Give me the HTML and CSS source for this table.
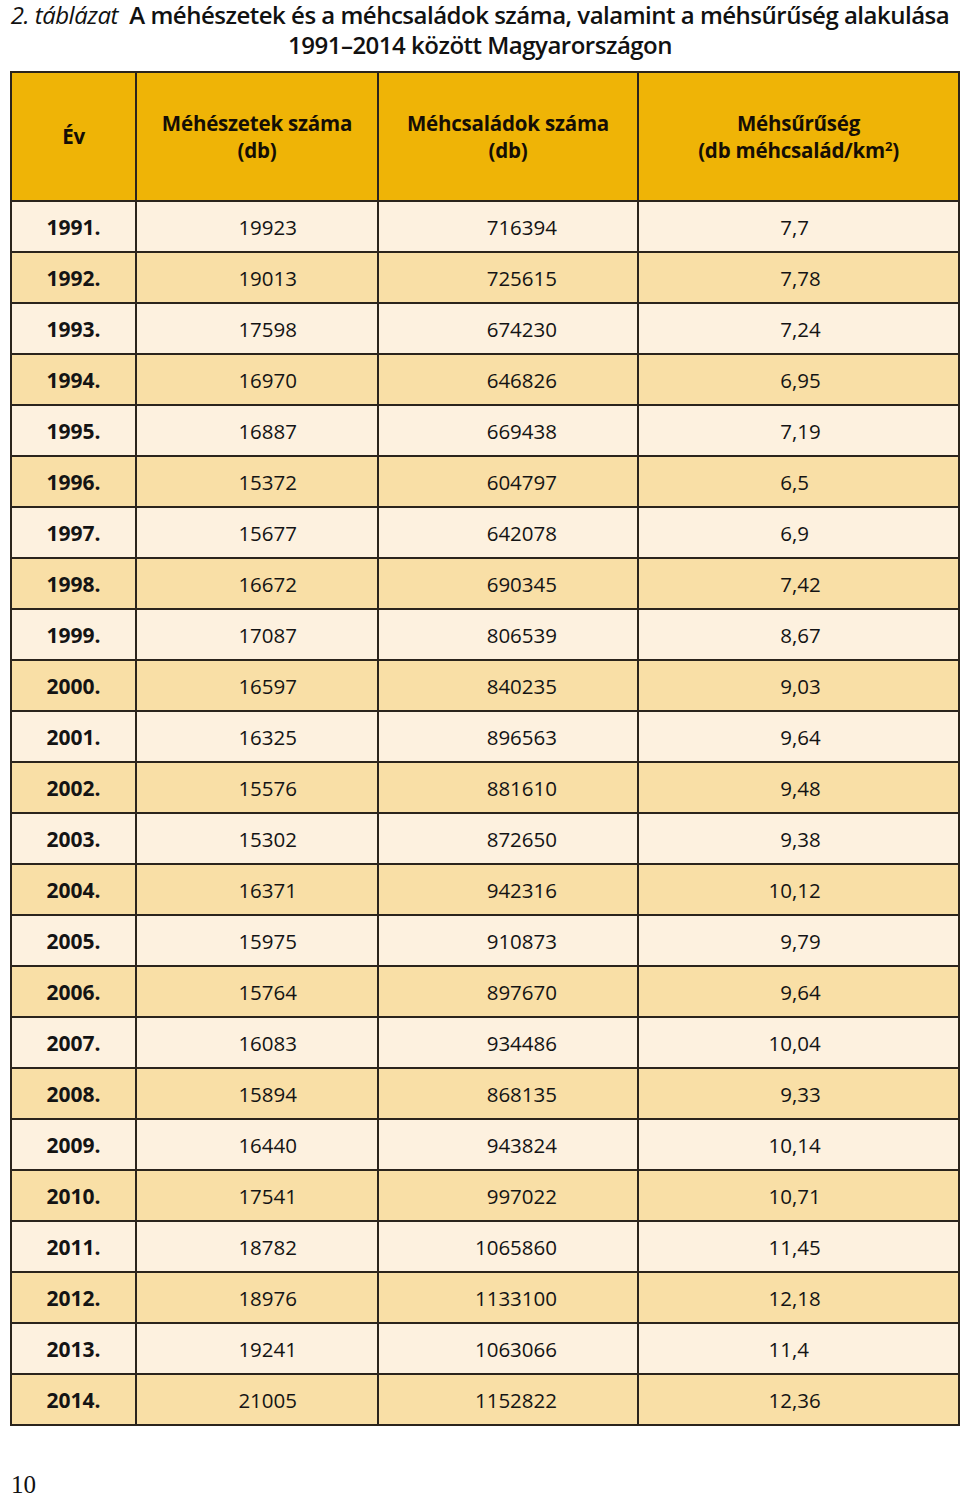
FILE: index.html
```html
<!DOCTYPE html>
<html lang="hu">
<head>
<meta charset="utf-8">
<link rel="stylesheet" href="styles.css">
</head>
<body>
<div class="page">
  <h1 class="title"><em>2. táblázat</em>&nbsp; A méhészetek és a méhcsaládok száma, valamint a méhsűrűség alakulása<br>1991–2014 között Magyarországon</h1>
  <table class="data">
    <colgroup>
      <col class="c1"><col class="c2"><col class="c3"><col class="c4">
    </colgroup>
    <thead>
      <tr>
        <th>Év</th>
        <th>Méhészetek száma<br>(db)</th>
        <th>Méhcsaládok száma<br>(db)</th>
        <th>Méhsűrűség<br>(db méhcsalád/km<sup>2</sup>)</th>
      </tr>
    </thead>
    <tbody>
      <tr class="l"><td class="y">1991.</td><td class="n">19923</td><td class="n">716394</td><td class="dec"><span class="i">7</span>,<span class="f">7</span></td></tr>
      <tr class="d"><td class="y">1992.</td><td class="n">19013</td><td class="n">725615</td><td class="dec"><span class="i">7</span>,<span class="f">78</span></td></tr>
      <tr class="l"><td class="y">1993.</td><td class="n">17598</td><td class="n">674230</td><td class="dec"><span class="i">7</span>,<span class="f">24</span></td></tr>
      <tr class="d"><td class="y">1994.</td><td class="n">16970</td><td class="n">646826</td><td class="dec"><span class="i">6</span>,<span class="f">95</span></td></tr>
      <tr class="l"><td class="y">1995.</td><td class="n">16887</td><td class="n">669438</td><td class="dec"><span class="i">7</span>,<span class="f">19</span></td></tr>
      <tr class="d"><td class="y">1996.</td><td class="n">15372</td><td class="n">604797</td><td class="dec"><span class="i">6</span>,<span class="f">5</span></td></tr>
      <tr class="l"><td class="y">1997.</td><td class="n">15677</td><td class="n">642078</td><td class="dec"><span class="i">6</span>,<span class="f">9</span></td></tr>
      <tr class="d"><td class="y">1998.</td><td class="n">16672</td><td class="n">690345</td><td class="dec"><span class="i">7</span>,<span class="f">42</span></td></tr>
      <tr class="l"><td class="y">1999.</td><td class="n">17087</td><td class="n">806539</td><td class="dec"><span class="i">8</span>,<span class="f">67</span></td></tr>
      <tr class="d"><td class="y">2000.</td><td class="n">16597</td><td class="n">840235</td><td class="dec"><span class="i">9</span>,<span class="f">03</span></td></tr>
      <tr class="l"><td class="y">2001.</td><td class="n">16325</td><td class="n">896563</td><td class="dec"><span class="i">9</span>,<span class="f">64</span></td></tr>
      <tr class="d"><td class="y">2002.</td><td class="n">15576</td><td class="n">881610</td><td class="dec"><span class="i">9</span>,<span class="f">48</span></td></tr>
      <tr class="l"><td class="y">2003.</td><td class="n">15302</td><td class="n">872650</td><td class="dec"><span class="i">9</span>,<span class="f">38</span></td></tr>
      <tr class="d"><td class="y">2004.</td><td class="n">16371</td><td class="n">942316</td><td class="dec"><span class="i">10</span>,<span class="f">12</span></td></tr>
      <tr class="l"><td class="y">2005.</td><td class="n">15975</td><td class="n">910873</td><td class="dec"><span class="i">9</span>,<span class="f">79</span></td></tr>
      <tr class="d"><td class="y">2006.</td><td class="n">15764</td><td class="n">897670</td><td class="dec"><span class="i">9</span>,<span class="f">64</span></td></tr>
      <tr class="l"><td class="y">2007.</td><td class="n">16083</td><td class="n">934486</td><td class="dec"><span class="i">10</span>,<span class="f">04</span></td></tr>
      <tr class="d"><td class="y">2008.</td><td class="n">15894</td><td class="n">868135</td><td class="dec"><span class="i">9</span>,<span class="f">33</span></td></tr>
      <tr class="l"><td class="y">2009.</td><td class="n">16440</td><td class="n">943824</td><td class="dec"><span class="i">10</span>,<span class="f">14</span></td></tr>
      <tr class="d"><td class="y">2010.</td><td class="n">17541</td><td class="n">997022</td><td class="dec"><span class="i">10</span>,<span class="f">71</span></td></tr>
      <tr class="l"><td class="y">2011.</td><td class="n">18782</td><td class="n">1065860</td><td class="dec"><span class="i">11</span>,<span class="f">45</span></td></tr>
      <tr class="d"><td class="y">2012.</td><td class="n">18976</td><td class="n">1133100</td><td class="dec"><span class="i">12</span>,<span class="f">18</span></td></tr>
      <tr class="l"><td class="y">2013.</td><td class="n">19241</td><td class="n">1063066</td><td class="dec"><span class="i">11</span>,<span class="f">4</span></td></tr>
      <tr class="d"><td class="y">2014.</td><td class="n">21005</td><td class="n">1152822</td><td class="dec"><span class="i">12</span>,<span class="f">36</span></td></tr>
    </tbody>
  </table>
  <div class="pagenum">10</div>
</div>
</body>
</html>
```

FILE: styles.css
```css
html, body {
  margin: 0;
  padding: 0;
  background: #ffffff;
}
.page {
  width: 960px;
  font-family: "Open Sans", "Noto Sans", sans-serif;
  color: #111111;
}
.title {
  margin: 0;
  padding: 0;
  font-size: 24px;
  font-weight: 600;
  line-height: 30px;
  text-align: center;
  letter-spacing: -0.5px;
  white-space: nowrap;
  color: #111111;
}
.title em {
  font-style: italic;
  font-weight: 500;
}
.data {
  margin: 11px 0 0 10px;
  width: 948px;
  border-collapse: collapse;
  table-layout: fixed;
  border: 2px solid #2b241c;
}
.c1 { width: 125px; }
.c2 { width: 242px; }
.c3 { width: 260px; }
.c4 { width: 321px; }
.data th, .data td {
  border: 2px solid #2b241c;
  text-align: center;
  padding: 0;
}
.data th {
  background: #efb406;
  height: 127px;
  font-size: 20.5px;
  font-weight: 700;
  line-height: 27px;
  letter-spacing: -0.2px;
  color: #150e05;
}
.data th sup {
  font-size: 13px;
  line-height: 0;
  vertical-align: 7px;
}
.data td {
  height: 49px;
  font-size: 20.5px;
  font-weight: 400;
  line-height: 24px;
  color: #141414;
}
.data td.y {
  font-weight: 700;
  font-size: 21px;
}
.data td.n {
  text-align: right;
  padding-right: 80px;
}
.data td.dec {
  text-align: left;
  padding-left: 129px;
}
.dec .i {
  display: inline-block;
  width: 24px;
  text-align: right;
}
.dec .f {
  display: inline-block;
  width: 24px;
  text-align: left;
}
.data tr.l td { background: #fdf1df; }
.data tr.d td { background: #f9dfa6; }
.pagenum {
  margin: 44px 0 0 11px;
  font-family: "Liberation Serif", "DejaVu Serif", serif;
  font-size: 25px;
  line-height: 30px;
  color: #111;
}
```
